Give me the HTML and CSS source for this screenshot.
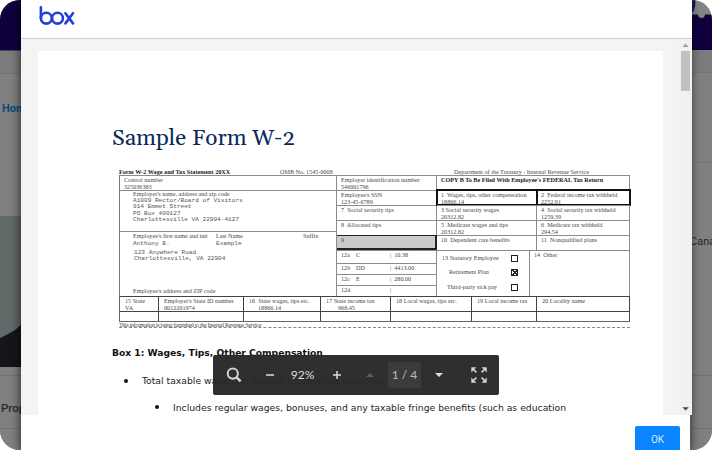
FILE: index.html
```html
<!DOCTYPE html>
<html lang="en">
<head>
<meta charset="utf-8">
<title>Document preview</title>
<link rel="stylesheet" href="styles.css">
</head>
<body>
<div class="screen">
  <aside class="back back-left">
    <div class="navy"></div>
    <div class="subnav"></div>
    <div class="crumb">Home</div>
    <svg class="photo" viewBox="0 0 40 151" width="40" height="151"><rect width="40" height="151" fill="#626969"/><path d="M0 122Q14 116 22 108L40 98V151H0Z" fill="#15161a"/></svg>
    <div class="prop">Properties</div>
    <div class="rest"></div>
  </aside>

  <main class="modal">
    <header class="brand">
      <svg width="37" height="22" viewBox="0 0 37 22" fill="none" stroke="#2140d8" stroke-width="2.6" stroke-linecap="round"><path d="M1.9 2.4V13"/><circle cx="7.3" cy="13.2" r="5.4"/><circle cx="18.5" cy="13.2" r="5.4"/><path d="M26.4 8.2L34 18.4M34 8.2L26.4 18.4"/></svg>
    </header>
    <section class="viewer">
      <article class="sheet">
        <h1>Sample Form W-2</h1>
        <div class="w2">
          <div class="w2-head"><b>Form W-2 Wage and Tax Statement 20XX</b><span>OMB No. 1545-0008</span><span>Department of the Treasury - Internal Revenue Service</span></div>
          <div class="w2-main">
            <div class="employer">
              <div class="cell ctl">Control number<br>325036383</div>
              <div class="cell addr">Employer's name, address and zip code<div class="mono">A1009 Rector/Board of Visitors<br>914 Emmet Street<br>PO Box 400127<br>Charlottesville VA 22904-4127</div></div>
              <div class="cell person">
                <div class="names"><span>Employee's first name and init<br><span class="mono">Anthony B.</span></span><span>Last Name<br><span class="mono">Example</span></span><span>Suffix</span></div>
                <div class="mono home">123 Anywhere Road<br>Charlottesville, VA 22904</div>
                <div class="zip">Employee's address and ZIP code</div>
              </div>
            </div>
            <div class="mid">
              <div class="cell">Employer identification number<br>546001796</div>
              <div class="cell">Employee's SSN<br>123-45-6789</div>
              <div class="cell">7&nbsp; Social security tips</div>
              <div class="cell">8&nbsp; Allocated tips</div>
              <div class="cell nine">9</div>
              <div class="cell code"><span>12a</span><span>C</span><span>|&nbsp; 10.38</span></div>
              <div class="cell code"><span>12b</span><span>DD</span><span>|&nbsp; 4413.00</span></div>
              <div class="cell code"><span>12c</span><span>E</span><span>|&nbsp; 280.00</span></div>
              <div class="cell code"><span>12d</span><span></span><span>|</span></div>
            </div>
            <div class="taxes">
              <div class="cell copy"><b>COPY B To Be Filed With Employee's FEDERAL Tax Return</b></div>
              <div class="cell thick">1&nbsp; Wages, tips, other compensation<br>18866.14</div>
              <div class="cell thick">2&nbsp; Federal income tax withheld<br>2252.91</div>
              <div class="cell">3 Social security wages<br>20312.82</div>
              <div class="cell">4&nbsp; Social security tax withheld<br>1259.39</div>
              <div class="cell">5&nbsp; Medicare wages and tips<br>20312.82</div>
              <div class="cell">6&nbsp; Medicare tax withheld<br>294.54</div>
              <div class="cell">10&nbsp; Dependent care benefits</div>
              <div class="cell">11&nbsp; Nonqualified plans</div>
              <div class="last">
                <div class="checks">
                  <div><span>13 Statutory Employee</span><i></i></div>
                  <div><span>Retirement Plan</span><i class="on"></i></div>
                  <div><span>Third-party sick pay</span><i></i></div>
                </div>
                <div class="cell other">14&nbsp; Other</div>
              </div>
            </div>
          </div>
          <div class="state">
            <div class="cell">15 State<br>VA</div>
            <div class="cell">Employer's State ID number<br>0012201974</div>
            <div class="cell">16&nbsp; State wages, tips etc.<br><span class="in9">18866.14</span></div>
            <div class="cell">17 State income tax<br><span class="in12">968.45</span></div>
            <div class="cell">18 Local wages, tips etc.</div>
            <div class="cell">19 Local income tax</div>
            <div class="cell">20 Locality name</div>
            <div class="cell"></div><div class="cell"></div><div class="cell"></div><div class="cell"></div><div class="cell"></div><div class="cell"></div><div class="cell"></div>
          </div>
          <div class="note"><span>This information is being furnished to the Internal Revenue Service</span></div>
        </div>
        <h2>Box 1: Wages, Tips, Other Compensation</h2>
        <p class="li one"><span class="dot"></span><span>Total taxable wages for federal income tax purposes</span></p>
        <p class="li two"><span class="dot"></span><span>Includes regular wages, bonuses, and any taxable fringe benefits (such as education</span></p>
      </article>
      <div class="scrollbar">
        <svg width="11" height="12" viewBox="0 0 11 12"><path d="M3.6 8L6.6 4.6L9.6 8Z" fill="#a0a0a0"/></svg>
        <div class="thumb"></div>
        <svg width="11" height="12" viewBox="0 0 11 12"><path d="M3.4 4.2H9.8L6.6 7.6Z" fill="#484848"/></svg>
      </div>
      <div class="toolbar">
        <svg class="t-search" width="16" height="16" viewBox="0 0 16 16" fill="none" stroke="#d3d3d3"><circle cx="6.8" cy="6.6" r="5.1" stroke-width="2"/><path d="M10.6 10.4L14.6 14.4" stroke-width="2.6"/></svg>
        <svg class="t-minus" width="10" height="10" viewBox="0 0 10 10"><path d="M1 5H9" stroke="#dedede" stroke-width="1.5"/></svg>
        <span class="t-zoom">92%</span>
        <svg class="t-plus" width="10" height="10" viewBox="0 0 10 10"><path d="M1 5H9M5 1V9" stroke="#dedede" stroke-width="1.5"/></svg>
        <svg class="t-up" width="8" height="6" viewBox="0 0 8 6"><path d="M0 5L4 1L8 5Z" fill="#5d5d5d"/></svg>
        <span class="t-page">1 / 4</span>
        <svg class="t-down" width="8" height="6" viewBox="0 0 8 6"><path d="M0 1H8L4 5Z" fill="#dedede"/></svg>
        <svg class="t-full" width="16" height="16" viewBox="0 0 16 16" fill="#d3d3d3" stroke="#d3d3d3"><g id="a"><path d="M0.3 0.3H5.4L0.3 5.4Z" stroke="none"/><path d="M2 2L5.4 5.4" stroke-width="1.7"/></g><use href="#a" transform="rotate(90 8 8)"/><use href="#a" transform="rotate(180 8 8)"/><use href="#a" transform="rotate(270 8 8)"/></svg>
      </div>
    </section>
    <footer><button>OK</button></footer>
  </main>

  <aside class="back back-right">
    <svg class="corner" width="20" height="50" viewBox="0 0 20 50"><path d="M0 0H20V15H0Z" fill="#858585"/><path d="M0 14.5H20V50H0Z" fill="#10003e"/><path d="M0 0H3.5Q3.5 10 0 13Z" fill="#10205a"/><circle cx="9.5" cy="14.5" r="3.4" fill="#858585"/></svg>
    <div class="subnav"></div>
    <div class="gap"></div>
    <div class="canal">Canal</div>
    <div class="row"></div>
    <div class="rest"></div>
  </aside>
</div>
</body>
</html>
```
FILE: styles.css
```css
* { box-sizing: border-box; }
body { margin: 0; background: #fff; font-family: "Open Sans", sans-serif; }
.screen { display: grid; grid-template-columns: 21px 671px 20px; width: 712px; height: 450px; border-radius: 20px; overflow: hidden; background: #808080; }
.back { display: flex; flex-direction: column; overflow: hidden; background: #808080; white-space: nowrap; }
.back > * { flex: none; }
.navy { height: 51px; background: #10003e; border-bottom: 1px solid #48405f; }
.subnav { height: 23px; background: #7c7c7c; border-bottom: 1px solid #747474; }
.crumb { height: 142px; padding: 27px 0 0 2px; font: bold 11px/16px Roboto, sans-serif; color: #0b4a7c; }
.photo { display: block; }
.prop { height: 62px; padding: 33px 0 0 1px; font: 500 11.5px/16px Roboto, sans-serif; color: #292929; background: linear-gradient(#808080 8px, #727272 8px, #727272 9px, #808080 9px); border-bottom: 1px solid #727272; }
.modal { position: relative; z-index: 1; display: flex; flex-direction: column; width: 669px; background: #fff; box-shadow: 0 2px 10px rgba(0,0,0,.75); }
.brand { width: 671px; height: 39px; padding: 5px 0 0 18px; background: #fff; border-bottom: 1px solid #cfcfcf; }
.brand svg { display: block; }
.viewer { position: relative; display: flex; width: 671px; height: 376px; overflow: hidden; background: #f4f4f4; }
.sheet { width: 625px; height: 376px; margin: 12px 16px 0 17px; padding: 0 0 0 74px; overflow: hidden; background: #fff; flex: none; }
h1 { height: 116px; margin: 0; padding-top: 70px; font: 22.6px/36px Georgia, Gelasio, "Liberation Serif", serif; color: #0b2a5c; }
.w2 { width: 511px; margin-left: 7px; font: 6.15px/7px "Liberation Serif", serif; color: #484848; white-space: nowrap; }
.w2-head { display: grid; grid-template-columns: 161px 174px 1fr; height: 8px; line-height: 10px; }
.w2-head b { color: #222; font-size: 6.2px; }
.w2-main { display: grid; grid-template-columns: 217px 100px 193px; height: 121px; border-left: 1px solid #777; }
.cell { border-top: 1px solid #8b8b8b; border-right: 1px solid #8b8b8b; min-width: 0; padding-top: .7px; }
.employer { display: grid; grid-template-rows: 15px 41px 65px; }
.ctl { padding-left: 4px; }
.addr { padding-left: 13px; line-height: 6px; padding-top: 0; }
.mono { font-family: "Liberation Mono", monospace; font-size: 6.1px; line-height: 6.3px; color: #555; }
.addr .mono { padding-top: 1px; }
.person { padding-left: 13px; }
.names { display: grid; grid-template-columns: 83px 87px 1fr; height: 17px; }
.home { padding-left: 1px; height: 38px; line-height: 6.5px; }
.mid { display: grid; grid-template-rows: 15px 15px 15px 15px 15px 13px 11px 11px 11px; }
.mid .cell { padding-left: 4px; }
.mid .nine { background: #cbcbcb; border: 2px solid #222; border-left: 0; border-top: 1px solid #222; }
.mid .code { display: grid; grid-template-columns: 15px 34px 1fr; }
.taxes { display: grid; grid-template-columns: 100px 93px; grid-template-rows: 15px 15px 15px 15px 15px 46px; }
.taxes .cell { padding-left: 4px; }
.taxes .copy { grid-column: span 2; color: #222; }
.taxes .thick { outline: 2px solid #111; outline-offset: -1px; border-color: transparent; }
.last { grid-column: span 2; display: grid; grid-template-columns: 93px 100px; border-top: 1px solid #8b8b8b; }
.checks { display: grid; grid-template-rows: repeat(3, 14.5px); border-right: 1px solid #8b8b8b; }
.checks div { display: flex; align-items: center; justify-content: space-between; padding: 0 11px 0 5px; }
.checks div:nth-child(2) { padding-left: 12px; }
.checks div:nth-child(3) { padding-left: 10px; }
.checks i { width: 7px; height: 7px; border: 1px solid #222; }
.checks .on { background: linear-gradient(45deg, transparent 40%, #222 40%, #222 60%, transparent 60%), linear-gradient(-45deg, transparent 40%, #222 40%, #222 60%, transparent 60%); }
.last .other { border-top: 0; }
.state { display: grid; grid-template-columns: 39px 85px 77px 70px 81px 65px 93px; grid-template-rows: 15px 10px; width: 511px; border-left: 1px solid #666; border-bottom: 1px solid #666; }
.state .cell { border-color: #444; padding: .7px 0 0 5px; }
.in9 { padding-left: 9px; }
.in12 { padding-left: 12px; }
.note { height: 6px; border-bottom: 1px dashed #888; font-size: 6px; line-height: 6px; letter-spacing: -.3px; }
h2 { height: 19px; margin: 17px 0 0; font: bold 9.17px/15px "DejaVu Sans", sans-serif; color: #111; }
.li { display: flex; align-items: center; height: 27px; margin: 0; font: 9.26px/15px "DejaVu Sans", sans-serif; color: #1d1d1d; white-space: nowrap; }
.dot { width: 4px; height: 4px; border-radius: 50%; background: #111; }
.one { padding: 6px 0 0 12px; gap: 14px; }
.two { padding: 5px 0 0 43px; gap: 14px; }
.scrollbar { display: flex; flex-direction: column; flex: none; width: 13px; background: #f1f1f1; }
.scrollbar svg { display: block; flex: none; }
.scrollbar svg:last-child { margin-top: auto; }
.thumb { width: 9px; height: 40px; margin-left: 2px; background: #c1c1c1; }
.toolbar { position: absolute; left: 192px; top: 316px; width: 286px; height: 39.5px; border-radius: 2px; background: rgba(40,40,40,.97); display: flex; align-items: center; color: #dedede; font: 12px/25px Lato, sans-serif; }
.toolbar > * { flex: none; }
.t-search { margin-left: 13px; }
.t-minus { margin-left: 23px; }
.t-zoom { width: 25px; margin-left: 15px; padding-bottom: 1px; text-align: center; }
.t-plus { margin-left: 17px; }
.t-up { margin-left: 24px; }
.t-page { width: 33px; margin-left: 14px; padding-bottom: 1px; text-align: center; border-radius: 2px; background: #3b3b3b; color: #bcbcbc; }
.t-down { margin-left: 14px; }
.t-full { margin-left: 28px; }
footer { display: flex; justify-content: flex-end; padding: 11px 10px 0 0; height: 35px; }
button { width: 45px; height: 27px; padding: 0; border: 0; border-radius: 2px 2px 0 0; background: #0a84ff; color: #d5e9ff; font: 10px/27px Roboto, sans-serif; }
.corner { display: block; }
.gap { height: 90px; border-bottom: 1px solid #767676; }
.canal { height: 213px; margin-left: -2px; padding-top: 71px; font: 11px/16px Roboto, sans-serif; color: #292929; border-bottom: 1px solid #727272; }
.row { height: 53px; border-bottom: 1px solid #727272; }
```
